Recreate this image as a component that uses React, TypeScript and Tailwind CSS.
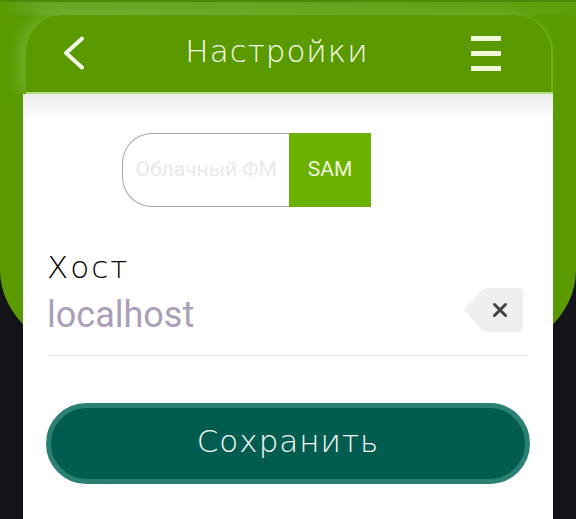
import { X } from 'lucide-react';

const titleFont = "font-['DejaVu_Sans','Inter',sans-serif]";

export default function App() {
  return (
    <div className="relative h-[519px] w-[576px] overflow-hidden bg-[#14131a]">
      {/* green backdrop behind the card */}
      <div className="absolute inset-x-0 top-0 h-[355px] rounded-b-[100px_85px] border-t-2 border-[#4a8a0a] bg-[#5a9a00]">
        <div className="h-[13px] bg-gradient-to-r from-[#5a9a00] via-[#6ba726] via-[10%] to-[#5f9e0a]" />
      </div>

      <div className="relative mx-[23px] flex h-[519px] flex-col pt-[15px]">
        <header className="ml-[3px] flex h-[79px] items-center justify-between rounded-t-[37px] border-b-2 border-[#b4e07c] bg-[#5a9a00] pl-[36px] pr-[52px] shadow-[-7px_-1px_14px_rgba(130,190,70,0.55),inset_-2px_0_0_#6fae1c]">
          <svg width="24" height="36" viewBox="0 0 24 36" fill="none" className="mt-[-1px]">
            <path d="M20 3.5 4 18l16 14.5" stroke="#f4fbe6" strokeWidth="4" strokeLinecap="round" strokeLinejoin="round" />
          </svg>
          <h1 className={`${titleFont} mb-[4px] mr-[3px] text-[31px] font-extralight tracking-[1px] text-[#f6fceb]`}>Настройки</h1>
          <div className="flex w-[30px] flex-col gap-[10px]">
            <div className="h-[5px] bg-[#f0f9d8]" />
            <div className="h-[5px] bg-[#f0f9d8]" />
            <div className="h-[5px] bg-[#f0f9d8]" />
          </div>
        </header>

        <main className="flex flex-1 flex-col bg-white bg-gradient-to-b from-[#ececec] via-white via-[6%] to-white px-[24px]">
          <div className="mt-[39px] flex h-[74px] pl-[75px]">
            <div className="flex w-[167px] items-center rounded-l-[30px] border-y-[1.5px] border-l-[1.5px] border-[#a8a8a8] pl-[12.5px] font-['Roboto',sans-serif] text-[21px] text-[#e9e8ec]">
              <span className="whitespace-nowrap">Облачный ФМ</span>
            </div>
            <div className="flex w-[82px] items-center justify-center bg-[#6cb100] font-['Roboto',sans-serif] text-[21px] text-[#eef8de]">
              SAM
            </div>
          </div>

          <label className={`${titleFont} mt-[42px] text-[31px] font-extralight leading-[36px] tracking-[2px] text-black`}>Хост</label>
          <div className="flex h-[71px] items-start justify-between border-b border-[#ececec] pr-[6px]">
            <span className="mt-[10px] font-['Roboto',sans-serif] text-[36px] leading-[40px] text-[#aa9fb8]">localhost</span>
            <svg width="60" height="44" viewBox="0 0 60 44" className="mt-[3px]">
              <path d="M1 22 19 2q2-2 5-2h31q5 0 5 5v34q0 5-5 5H24q-3 0-5-2Z" fill="#efefef" />
              <foreignObject x="26" y="11" width="22" height="22">
                <X size={22} strokeWidth={3.2} color="#444" />
              </foreignObject>
            </svg>
          </div>

          <button className={`${titleFont} -mx-px mt-[47px] h-[81px] rounded-full border-[5.5px] border-[#2a8173] bg-[#035c50] pb-[4px] text-[31px] font-extralight tracking-[1px] text-[#f2fbf7]`}>
            Сохранить
          </button>
        </main>
      </div>
    </div>
  );
}
